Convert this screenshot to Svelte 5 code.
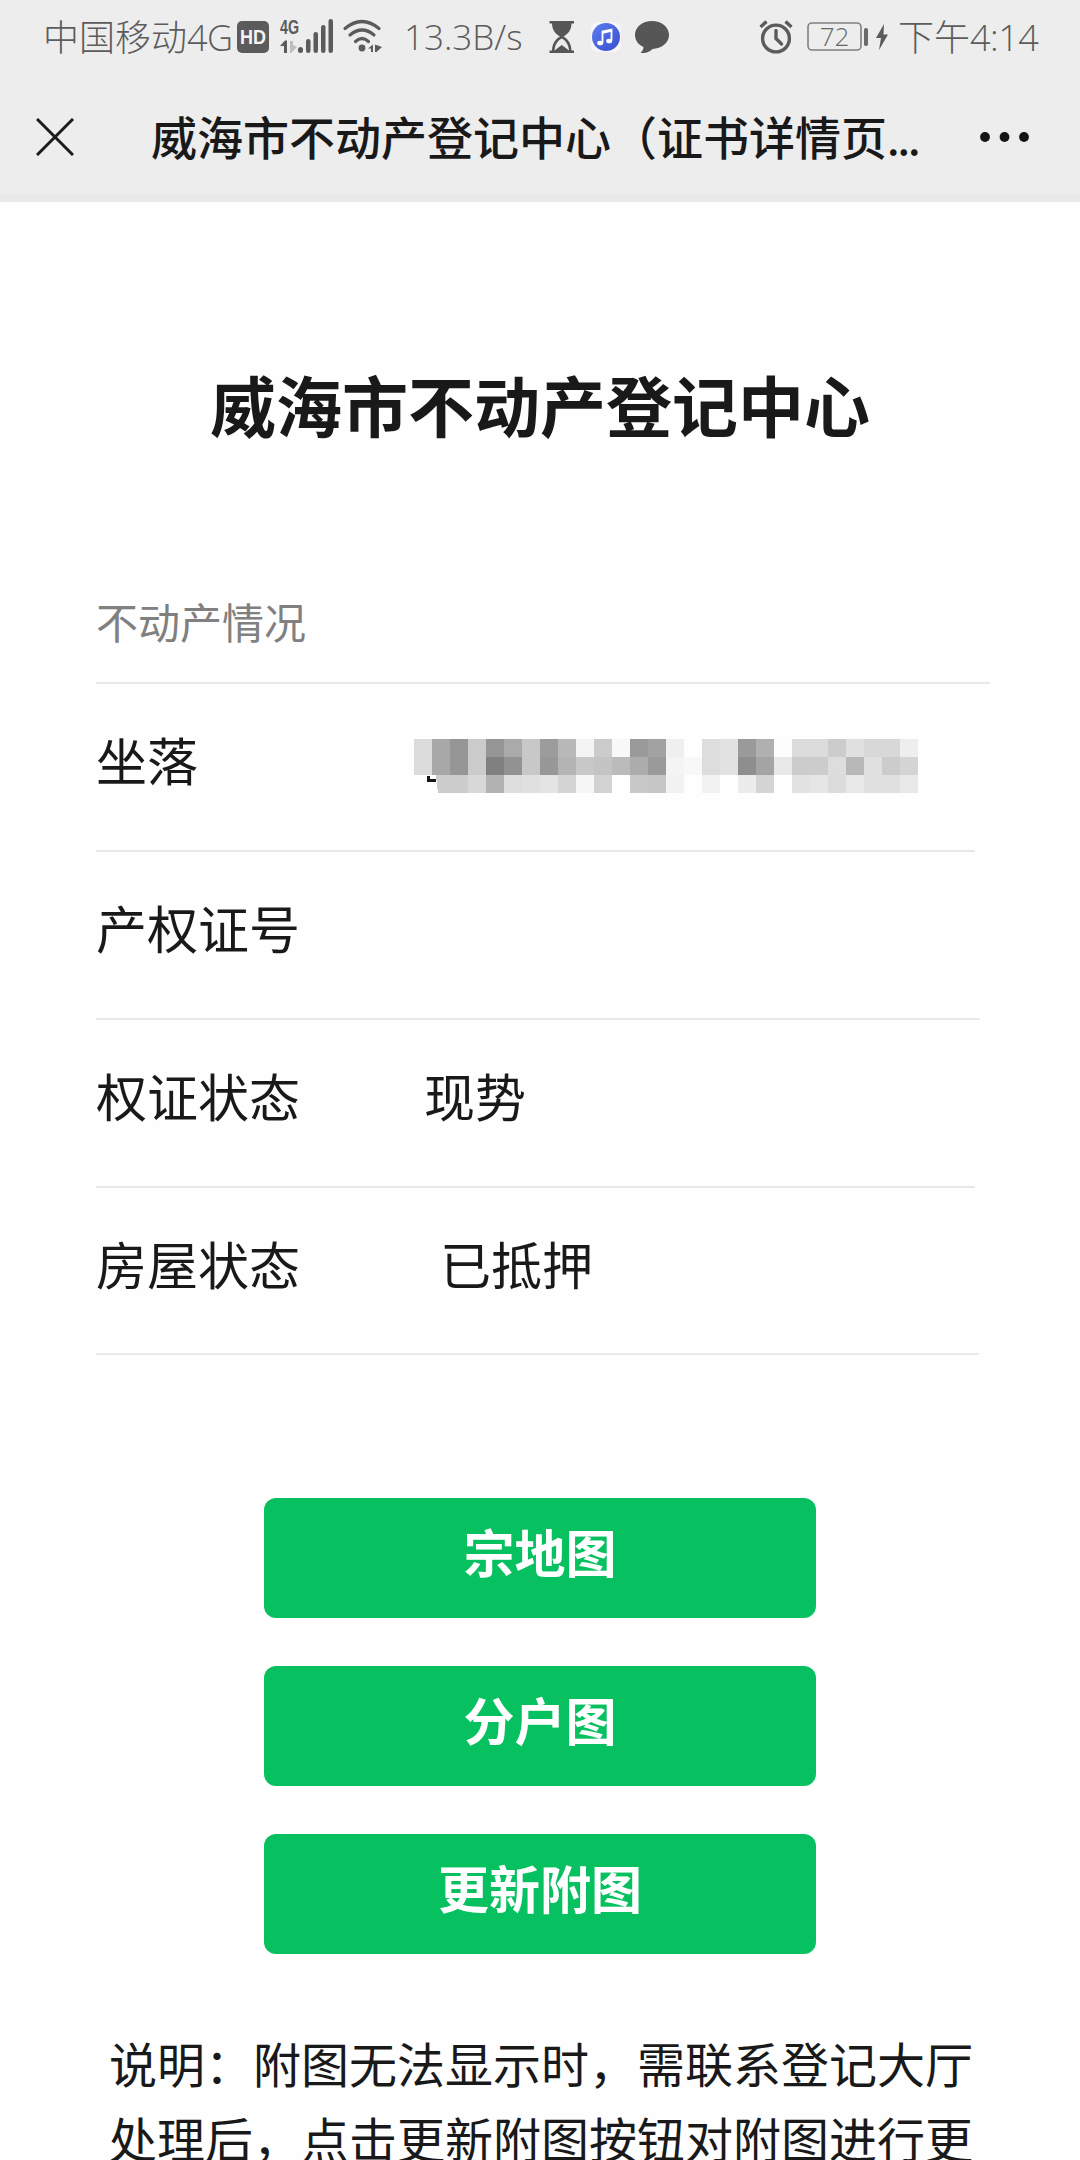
<!--
  产权证书详情页
  顶部状态栏 + 导航栏，下面是标题、信息列表和操作按钮
-->
<script lang="ts">
    interface Row {
        label: string;
        value?: string;
        indent?: number;
        lineWidth: number;
        masked?: boolean;
    }

    const rows: Row[] = [
        { label: "坐落", lineWidth: 879, masked: true },
        { label: "产权证号", lineWidth: 884 },
        { label: "权证状态", value: "现势", indent: 0, lineWidth: 879 },
        { label: "房屋状态", value: "已抵押", indent: 16, lineWidth: 883 }
    ];

    const buttons = ["宗地图", "分户图", "更新附图"];

    // 地址打码的灰度值，每行 28 格
    const mosaic = [
        "dc a8 96 cb 96 aa c8 9c b8 f4 cb f8 9a a2 f0 fe dd e2 9a b0 fd dc dc cc e0 d8 d8 ee",
        "dc a8 96 cb 80 92 c8 98 b4 c8 c4 bb ac 9a f4 f8 dd e2 8e a4 e8 cc cc dd b8 e0 cc d4",
        "ff cc cc d8 b2 de e0 e4 d4 f6 d2 fe c8 c6 f2 fe f2 fe ec d4 fe e2 e6 dc e8 e0 e0 e8"
    ].map((line) => line.split(" "));
</script>

<div class="page">
    <div class="status">
        <span class="status__carrier">中国移动<i>4G</i></span>
        <svg class="status__hd" width="32" height="32" viewBox="0 0 32 32">
            <rect width="32" height="32" rx="5" fill="#5b5b5b" />
            <text x="16" y="23" text-anchor="middle" textLength="26" lengthAdjust="spacingAndGlyphs" font-size="20" font-weight="700" fill="#f4f4f4">HD</text>
        </svg>
        <svg class="status__signal" width="54" height="36" viewBox="0 0 54 36" fill="#5b5b5b">
            <text x="0" y="15" textLength="19" lengthAdjust="spacingAndGlyphs" font-size="20" font-weight="700">4G</text>
            <path d="M0 27L5 21.500H7V34H4V27Z" />
            <path d="M10 22H13V26L17 28L11 34H10Z" fill="#bdbdbd" />
            <rect x="18" y="28" width="5" height="6" rx="2.500" />
            <rect x="26" y="20" width="4.500" height="14" rx="2.200" />
            <rect x="33.500" y="13" width="4.500" height="21" rx="2.200" />
            <rect x="41" y="6" width="4.500" height="28" rx="2.200" />
            <rect x="48.500" y="0" width="4.500" height="34" rx="2.200" />
        </svg>
        <svg class="status__wifi" width="40" height="34" viewBox="0 0 40 34" fill="none" stroke="#5b5b5b" stroke-width="3.200" stroke-linecap="round">
            <path d="M2 8.500Q19 -5.500 36 8.500" />
            <path d="M7 15Q19 5 31 15" />
            <path d="M12.500 21.500Q19 15.500 25.500 21.500" />
            <circle cx="19" cy="28" r="3.400" fill="#5b5b5b" stroke="none" />
            <path d="M25 28.500L30 24.500V32H28V28.500ZM32 24.500L39 27L33.500 32H32Z" fill="#5b5b5b" stroke="none" />
        </svg>
        <span class="status__speed">13.3B/s</span>
        <svg class="status__glass" width="26" height="32" viewBox="0 0 26 32" fill="#565656">
            <path d="M0.500 0H25V2.500H22.500C22.500 9 19 13 14.500 15.500C19 18 22.500 23 22.500 29.500H25V32H0.500V29.500H3C3 23 6.500 18 11 15.500C6.500 13 3 9 3 2.500H0.500Z" />
            <path d="M5.500 29.500C6 23 9.500 19 12.750 17.500C16 19 19.500 23 20 29.500L12.750 24Z" fill="#ececec" />
        </svg>
        <svg class="status__music" width="30" height="30" viewBox="0 0 30 30">
            <defs>
                <linearGradient id="music" x1="0" y1="0" x2="1" y2="1">
                    <stop offset="0" stop-color="#5a7df0" />
                    <stop offset="1" stop-color="#3b50cc" />
                </linearGradient>
            </defs>
            <rect width="30" height="30" rx="7" fill="#f7f4fb" />
            <circle cx="15" cy="15" r="14" fill="url(#music)" />
            <path d="M11.500 21V9.500L20.500 7.500V18.500" fill="none" stroke="#fff" stroke-width="1.800" />
            <path d="M11.500 10.500L20.500 8.500" stroke="#fff" stroke-width="2.500" />
            <ellipse cx="9.200" cy="21" rx="3" ry="2.300" fill="#fff" />
            <ellipse cx="18.200" cy="19" rx="3" ry="2.300" fill="#fff" />
        </svg>
        <svg class="status__chat" width="34" height="33" viewBox="0 0 34 33" fill="#565656">
            <path d="M17 0C26.500 0 34 6 34 14S26.500 27.500 17.500 28C14 31.500 9 32.500 5.500 32C7.500 30 8.500 28 8.500 26C3 23.500 0 19 0 14C0 6 7.500 0 17 0Z" />
        </svg>
        <svg class="status__alarm" width="34" height="34" viewBox="0 0 34 34" fill="none" stroke="#5b5b5b" stroke-width="3.400">
            <circle cx="17" cy="18.500" r="13.400" />
            <path d="M17 10.500V18.500L22.500 24" stroke-linecap="round" />
            <path d="M1.500 7L7.500 1.500M26.500 1.500L32.500 7" />
        </svg>
        <svg class="status__battery" width="82" height="32" viewBox="0 0 82 32">
            <rect x="1" y="2" width="53" height="27" rx="4" fill="none" stroke="#808080" stroke-width="1.600" />
            <text x="27.500" y="25" text-anchor="middle" class="battery-text" font-size="26" fill="#686868">72</text>
            <rect x="57" y="7" width="4" height="18" rx="1.800" fill="#6b6b6b" />
            <path d="M77 3L69 17H74L72 29L81 13.500H76.500Z" fill="#5b5b5b" />
        </svg>
        <span class="status__time">下午<i>4:14</i></span>
    </div>

    <header class="nav">
        <svg class="nav__close" width="38" height="38" viewBox="0 0 38 38" stroke="#1c1c1c" stroke-width="3">
            <path d="M1 1L37 37M37 1L1 37" />
        </svg>
        <div class="nav__title">威海市不动产登记中心（证书详情页<span>...</span></div>
        <svg class="nav__more" width="50" height="10" viewBox="0 0 50 10" fill="#151515">
            <circle cx="5" cy="5" r="4.900" />
            <circle cx="24.500" cy="5" r="4.900" />
            <circle cx="44" cy="5" r="4.900" />
        </svg>
    </header>

    <main class="content">
        <h1>威海市不动产登记中心</h1>

        <section class="info">
            <div class="info__caption">不动产情况</div>
            {#each rows as row}
                <div class="info__row">
                    <span class="info__label">{row.label}</span>
                    {#if row.masked}
                        <svg class="info__mask" width="504" height="54" viewBox="0 0 504 54" shape-rendering="crispEdges">
                            {#each mosaic as line, y}
                                {#each line as gray, x}
                                    <rect x={x * 18} y={y * 18} width="18" height="18" fill="#{gray}{gray}{gray}" />
                                {/each}
                            {/each}
                            <path d="M18 36H22L24 54H18Z" fill="#fff" />
                            <path d="M13 37H15.500V40H22V43H13Z" fill="#151515" />
                        </svg>
                    {:else if row.value}
                        <span class="info__value" style="padding-left: {row.indent}px">{row.value}</span>
                    {/if}
                </div>
                <div class="info__line" style="width: {row.lineWidth}px"></div>
            {/each}
        </section>

        <div class="actions">
            {#each buttons as name}
                <button>{name}</button>
            {/each}
        </div>

        <p class="note">说明：附图无法显示时，需联系登记大厅处理后，点击更新附图按钮对附图进行更</p>
    </main>
</div>

<style>
    :global(body) {
        margin: 0;
        background: #fefefe;
    }

    .page {
        width: 1080px;
        height: 2160px;
        overflow: hidden;
        background: #fefefe;
        color: #191919;
        font-family: "Noto Sans CJK SC", sans-serif;
    }

    /* 状态栏 */
    .status {
        display: flex;
        align-items: center;
        box-sizing: border-box;
        height: 74px;
        padding-left: 43px;
        background: #ededed;
        color: #5c5c5c;
        font-size: 36px;
        font-weight: 300;
        line-height: 72px;
        white-space: nowrap;
    }

    .status svg {
        flex-shrink: 0;
        overflow: visible;
        font-family: "Liberation Sans", sans-serif;
    }

    .status i,
    .status__speed,
    .status .battery-text {
        font-family: "Open Sans", "Noto Sans", sans-serif;
        font-style: normal;
        font-weight: 300;
    }

    .status i {
        letter-spacing: -0.5px;
    }

    .status__carrier {
        width: 194px;
        margin-top: -2px;
    }

    .status__signal {
        margin-left: 11px;
    }

    .status__wifi {
        margin-left: 9px;
    }

    .status__speed {
        width: 122px;
        margin-left: 21px;
        font-size: 35px;
    }

    .status__glass {
        margin-left: 23px;
    }

    .status__music {
        margin-left: 16px;
    }

    .status__chat {
        margin-left: 14px;
    }

    .status__alarm {
        margin-left: 90px;
    }

    .status__battery {
        margin-left: 14px;
    }

    .status__time {
        margin: -2px 0 0 9px;
    }

    /* 导航栏 */
    .nav {
        display: flex;
        align-items: center;
        box-sizing: border-box;
        height: 128px;
        padding: 6px 50px 0 36px;
        border-bottom: 8px solid #e9e9e9;
        background: #ededed;
    }

    .nav__title {
        flex: 1;
        margin: -2px 0 0 77px;
        font-size: 46px;
        font-weight: 500;
        line-height: 60px;
        white-space: nowrap;
    }

    .nav__title span {
        font-size: 42px;
        letter-spacing: -2px;
    }

    .content {
        padding: 0 96px;
    }

    h1 {
        margin: 151px 0 0;
        font-size: 66px;
        font-weight: 700;
        line-height: 100px;
        text-align: center;
    }

    /* 信息列表 */
    .info__caption {
        width: 894px;
        height: 123px;
        margin-top: 106px;
        border-bottom: 2px solid #e8e8e8;
        color: #808080;
        font-size: 42px;
        line-height: 123px;
    }

    .info__row {
        display: flex;
        align-items: center;
        height: 166px;
        font-size: 51px;
    }

    .info__row:nth-last-child(2) {
        height: 165px;
    }

    .info__label,
    .info__value {
        margin-top: -16px;
    }

    .info__label {
        width: 328px;
    }

    .info__mask {
        margin: -2px 0 0 -10px;
    }

    .info__line {
        height: 2px;
        background: #e8e8e8;
    }

    /* 操作按钮 */
    .actions {
        display: flex;
        flex-direction: column;
        gap: 48px;
        width: 552px;
        margin: 143px auto 0;
    }

    .actions button {
        height: 120px;
        padding: 0 0 14px;
        border: none;
        border-radius: 12px;
        background: #07c160;
        color: #fff;
        font-family: inherit;
        font-size: 51px;
        font-weight: 700;
        line-height: 70px;
    }

    .note {
        width: 870px;
        margin: 71px 0 0 13px;
        font-size: 48px;
        line-height: 75px;
    }
</style>
